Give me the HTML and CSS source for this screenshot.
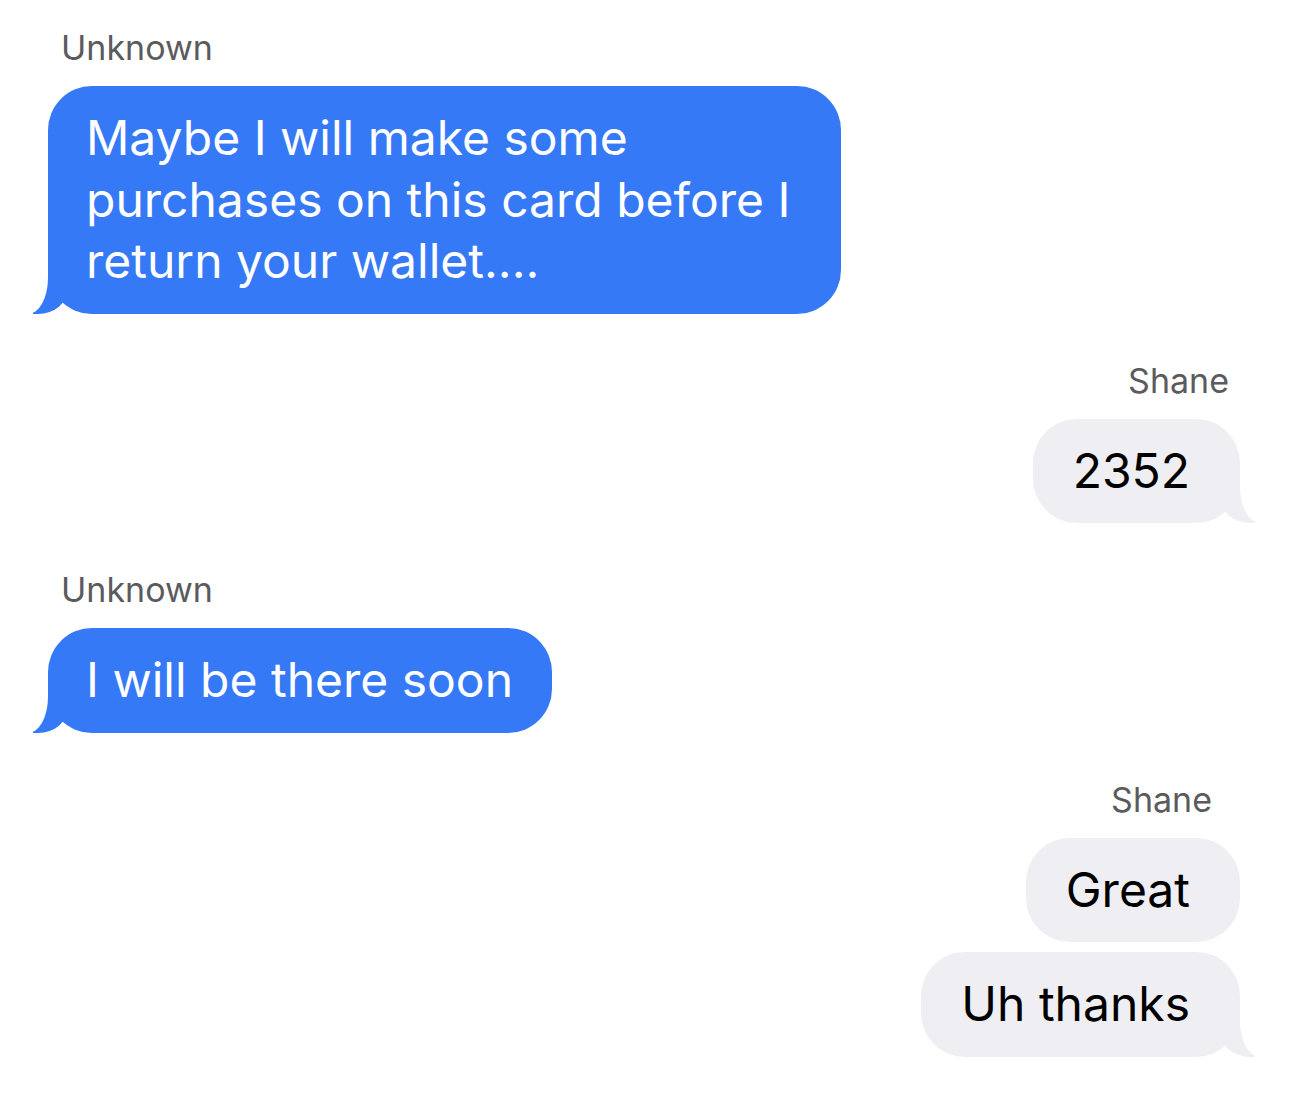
FILE: index.html
```
<!DOCTYPE html>
<html lang="en">
<head>
<meta charset="UTF-8" />
<meta name="viewport" content="width=device-width, initial-scale=1.0"/>
<title>Messages</title>
<link rel="stylesheet" href="styles.css">
</head>
<body>

<div class="thread">

  <div class="group in">
    <div class="name">Unknown</div>
    <div class="bubble tail">Maybe I will make some purchases on this card before I return your wallet....</div>
  </div>

  <div class="group out">
    <div class="name">Shane</div>
    <div class="bubble tail">2352</div>
  </div>

  <div class="group in">
    <div class="name">Unknown</div>
    <div class="bubble tail">I will be there soon</div>
  </div>

  <div class="group out">
    <div class="name far">Shane</div>
    <div class="bubble">Great</div>
    <div class="bubble tail">Uh thanks</div>
  </div>

</div>

</body>
</html>
```

FILE: styles.css
```
:root {
  --blue: #3579f6;
  --gray: #efeff3;
  --label: #5b5b5d;
  --bg: #fff;
}

body {
  margin: 0;
  background: var(--bg);
  font-family: Inter, "Liberation Sans", sans-serif;
}

.thread {
  display: flex;
  flex-direction: column;
  gap: 47px;
  padding: 28px 50px 40px 48px;
}

.group {
  display: flex;
  flex-direction: column;
  gap: 10px;
}
.group.in { align-items: flex-start; }
.group.out { align-items: flex-end; }

.name {
  font-size: 34px;
  line-height: 40px;
  color: var(--label);
  margin-bottom: 8px;
}
.in .name { margin-left: 13px; }
.out .name { margin-right: 11px; }
.out .name.far { margin-right: 28px; }

.bubble {
  position: relative;
  max-width: 716px;
  padding: 21px 39px 22px 38px;
  border-radius: 44px;
  font-size: 48px;
  line-height: 61.5px;
}
.in .bubble {
  background: var(--blue);
  color: #fff;
}
.out .bubble {
  padding: 21px 50px 22px 40px;
  background: var(--gray);
  color: #000;
}

/* tail */
.bubble.tail::before,
.bubble.tail::after {
  content: "";
  position: absolute;
  bottom: 0;
  height: 48px;
}
.in .bubble.tail::before {
  left: -15px;
  width: 35px;
  background: var(--blue);
  border-bottom-right-radius: 30px 26px;
}
.in .bubble.tail::after {
  left: -40px;
  width: 40px;
  background: var(--bg);
  border-bottom-right-radius: 20px 36px;
}
.out .bubble.tail::before {
  right: -15px;
  width: 35px;
  background: var(--gray);
  border-bottom-left-radius: 30px 26px;
}
.out .bubble.tail::after {
  right: -40px;
  width: 40px;
  background: var(--bg);
  border-bottom-left-radius: 20px 36px;
}
```
